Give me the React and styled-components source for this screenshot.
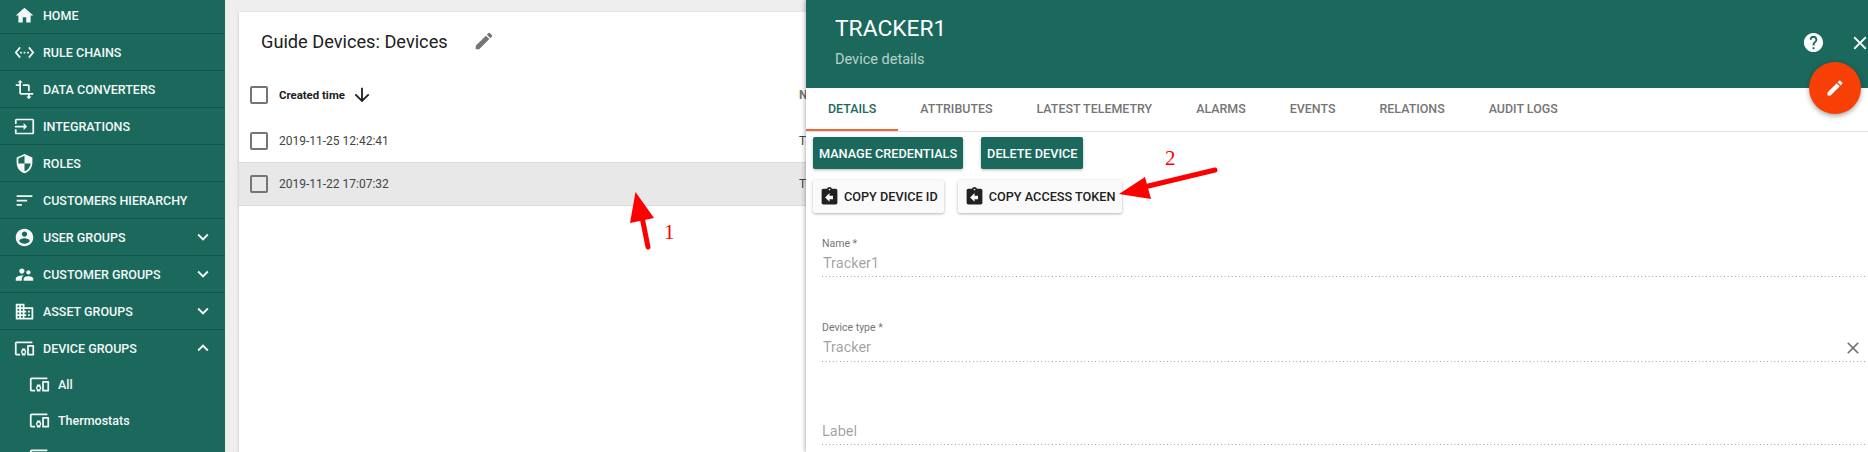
import styled, { createGlobalStyle } from 'styled-components'

const ICONS = {
  home: 'M10 20v-6h4v6h5v-8h3L12 3 2 12h3v8z',
  chains:
    'M7.77 6.76L6.23 5.48.82 12l5.41 6.52 1.54-1.28L3.42 12l4.35-5.24zM7 13h2v-2H7v2zm10-2h-2v2h2v-2zm-6 2h2v-2h-2v2zm6.77-7.52l-1.54 1.28L20.58 12l-4.35 5.24 1.54 1.28L23.18 12l-5.41-6.52z',
  transform:
    'M22 18v-2H8V4h2L7 1 4 4h2v2H2v2h4v8c0 1.1.9 2 2 2h8v2h-2l3 3 3-3h-2v-2h4zM10 8h6v6h2V8c0-1.1-.9-2-2-2h-6v2z',
  input:
    'M21 3.01H3c-1.1 0-2 .9-2 2V9h2V4.99h18v14.03H3V15H1v4.01c0 1.1.9 1.98 2 1.98h18c1.1 0 2-.88 2-1.98v-14c0-1.11-.9-2-2-2zM11 16l4-4-4-4v3H1v2h10v3z',
  security:
    'M12 1L3 5v6c0 5.55 3.84 10.74 9 12 5.16-1.26 9-6.45 9-12V5l-9-4zm0 10.99h7c-.53 4.12-3.28 7.79-7 8.94V12H5V6.3l7-3.11v8.8z',
  sort: 'M3 18h6v-2H3v2zM3 6v2h18V6H3zm0 7h12v-2H3v2z',
  account:
    'M12 2C6.48 2 2 6.48 2 12s4.48 10 10 10 10-4.48 10-10S17.52 2 12 2zm0 3c1.66 0 3 1.34 3 3s-1.34 3-3 3-3-1.34-3-3 1.34-3 3-3zm0 14.2c-2.5 0-4.71-1.28-6-3.22.03-1.99 4-3.08 6-3.08 1.99 0 5.97 1.09 6 3.08-1.29 1.94-3.5 3.22-6 3.22z',
  supervisor:
    'M16.5 12c1.38 0 2.49-1.12 2.49-2.5S17.88 7 16.5 7C15.12 7 14 8.12 14 9.5s1.12 2.5 2.5 2.5zM9 11c1.66 0 2.99-1.34 2.99-3S10.66 5 9 5C7.34 5 6 6.34 6 8s1.34 3 3 3zm7.5 3c-1.83 0-5.5.92-5.5 2.75V19h11v-2.25c0-1.83-3.67-2.75-5.5-2.75zM9 13c-2.33 0-7 1.17-7 3.5V19h7v-2.25c0-.85.33-2.34 2.37-3.47C10.5 13.1 9.66 13 9 13z',
  domain:
    'M12 7V3H2v18h20V7H12zM6 19H4v-2h2v2zm0-4H4v-2h2v2zm0-4H4V9h2v2zm0-4H4V5h2v2zm4 12H8v-2h2v2zm0-4H8v-2h2v2zm0-4H8V9h2v2zm0-4H8V5h2v2zm10 12h-8v-2h2v-2h-2v-2h2v-2h-2V9h8v10zm-2-8h-2v2h2v-2zm0 4h-2v2h2v-2z',
  devices:
    'M3 6h18V4H3c-1.1 0-2 .9-2 2v12c0 1.1.9 2 2 2h4v-2H3V6zm10 6H9v1.78c-.61.55-1 1.33-1 2.22s.39 1.67 1 2.22V20h4v-1.78c.61-.55 1-1.34 1-2.22s-.39-1.67-1-2.22V12zm-2 5.5c-.83 0-1.5-.67-1.5-1.5s.67-1.5 1.5-1.5 1.5.67 1.5 1.5-.67 1.5-1.5 1.5zM22 8h-6c-.5 0-1 .5-1 1v10c0 .5.5 1 1 1h6c.5 0 1-.5 1-1V9c0-.5-.5-1-1-1zm-1 10h-4v-8h4v8z',
  more: 'M16.59 8.59L12 13.17 7.41 8.59 6 10l6 6 6-6z',
  less: 'M12 8l-6 6 1.41 1.41L12 10.83l4.59 4.58L18 14z',
  edit: 'M3 17.25V21h3.75L17.81 9.94l-3.75-3.75L3 17.25zM20.71 7.04c.39-.39.39-1.02 0-1.41l-2.34-2.34c-.39-.39-1.02-.39-1.41 0l-1.83 1.83 3.75 3.75 1.83-1.83z',
  help: 'M12 2C6.48 2 2 6.48 2 12s4.48 10 10 10 10-4.48 10-10S17.52 2 12 2zm1 17h-2v-2h2v2zm2.07-7.75l-.9.92C13.45 12.9 13 13.5 13 15h-2v-.5c0-1.1.45-2.1 1.17-2.83l1.24-1.26c.37-.36.59-.86.59-1.41 0-1.1-.9-2-2-2s-2 .9-2 2H8c0-2.21 1.79-4 4-4s4 1.79 4 4c0 .88-.36 1.68-.93 2.25z',
  close:
    'M19 6.41L17.59 5 12 10.59 6.41 5 5 6.41 10.59 12 5 17.59 6.41 19 12 13.41 17.59 19 19 17.59 13.41 12z',
  down: 'M20 12l-1.41-1.41L13 16.17V4h-2v12.17l-5.58-5.59L4 12l8 8 8-8z',
  clipboard:
    'M19 3h-4.18C14.4 1.84 13.3 1 12 1c-1.3 0-2.4.84-2.82 2H5c-1.1 0-2 .9-2 2v14c0 1.1.9 2 2 2h14c1.1 0 2-.9 2-2V5c0-1.1-.9-2-2-2zm-7 0c.55 0 1 .45 1 1s-.45 1-1 1-1-.45-1-1 .45-1 1-1zm4 12h-4v3l-5-5 5-5v3h4v4z',
}

const Icon = ({ name, size = 24, color = 'currentColor' }) => (
  <IconSvg viewBox="0 0 24 24" width={size} height={size} fill={color}>
    <path d={ICONS[name]} />
  </IconSvg>
)

const MENU = [
  { icon: 'home', label: 'HOME' },
  { icon: 'chains', label: 'RULE CHAINS' },
  { icon: 'transform', label: 'DATA CONVERTERS' },
  { icon: 'input', label: 'INTEGRATIONS' },
  { icon: 'security', label: 'ROLES' },
  { icon: 'sort', label: 'CUSTOMERS HIERARCHY' },
  { icon: 'account', label: 'USER GROUPS', chevron: 'more' },
  { icon: 'supervisor', label: 'CUSTOMER GROUPS', chevron: 'more' },
  { icon: 'domain', label: 'ASSET GROUPS', chevron: 'more' },
  { icon: 'devices', label: 'DEVICE GROUPS', chevron: 'less', open: true },
]

const SUBMENU = ['All', 'Thermostats', '']

const TABS = [
  'DETAILS',
  'ATTRIBUTES',
  'LATEST TELEMETRY',
  'ALARMS',
  'EVENTS',
  'RELATIONS',
  'AUDIT LOGS',
]

const ROWS = [
  { time: '2019-11-25 12:42:41' },
  { time: '2019-11-22 17:07:32', selected: true },
]

const App = () => {
  return (
    <Page>
      <GlobalStyle />
      <Sidebar>
        <Menu>
          {MENU.map(item => (
            <MenuItem key={item.label} $open={item.open}>
              <Icon name={item.icon} size={21} />
              <MenuLabel>{item.label}</MenuLabel>
              {item.chevron && (
                <Chevron>
                  <Icon name={item.chevron} size={22} />
                </Chevron>
              )}
            </MenuItem>
          ))}
          <SubMenu>
            {SUBMENU.map(label => (
              <SubItem key={label}>
                <Icon name="devices" size={21} />
                <SubLabel>{label}</SubLabel>
              </SubItem>
            ))}
          </SubMenu>
        </Menu>
      </Sidebar>

      <Main>
        <Card>
          <CardHeader>
            <CardTitle>Guide Devices: Devices</CardTitle>
            <Icon name="edit" size={22} color="#757575" />
          </CardHeader>
          <HeadRow>
            <Checkbox />
            <TimeHead>
              Created time
              <Icon name="down" size={22} color="#212121" />
            </TimeHead>
            <NameCell $head>Name</NameCell>
          </HeadRow>
          {ROWS.map(row => (
            <Row key={row.time} $selected={row.selected}>
              <Checkbox />
              <TimeCell>{row.time}</TimeCell>
              <NameCell>Tracker1</NameCell>
            </Row>
          ))}
        </Card>

        <Drawer>
          <DrawerHeader>
            <DrawerTitle>TRACKER1</DrawerTitle>
            <DrawerSubtitle>Device details</DrawerSubtitle>
            <HeaderActions>
              <Icon name="help" size={23} color="#fff" />
              <Icon name="close" size={22} color="#fff" />
            </HeaderActions>
            <Fab>
              <Icon name="edit" size={20} color="#fff" />
            </Fab>
          </DrawerHeader>

          <Tabs>
            {TABS.map((tab, i) => (
              <Tab key={tab} $active={i === 0}>
                {tab}
              </Tab>
            ))}
          </Tabs>

          <Actions>
            <ActionRow $gap={18}>
              <PrimaryButton>MANAGE CREDENTIALS</PrimaryButton>
              <PrimaryButton>DELETE DEVICE</PrimaryButton>
            </ActionRow>
            <ActionRow $gap={14}>
              <CopyButton>
                <Icon name="clipboard" size={21} color="#212121" />
                COPY DEVICE ID
              </CopyButton>
              <CopyButton>
                <Icon name="clipboard" size={21} color="#212121" />
                COPY ACCESS TOKEN
              </CopyButton>
            </ActionRow>
          </Actions>

          <Form>
            <Field>
              <FieldLabel>Name *</FieldLabel>
              <FieldValue>Tracker1</FieldValue>
            </Field>
            <Field $pad={4}>
              <FieldLabel>Device type *</FieldLabel>
              <FieldValue>Tracker</FieldValue>
              <ClearIcon>
                <Icon name="close" size={20} color="#757575" />
              </ClearIcon>
            </Field>
            <Field $top={16}>
              <FieldValue $placeholder>Label</FieldValue>
            </Field>
          </Form>
        </Drawer>

        <Annotations viewBox="0 0 1643 452" width="1643" height="452">
          <path d="M423 247 L417 217" stroke="#f00" strokeWidth="5" strokeLinecap="round" />
          <polygon points="410.5,192 405,223 429,218" fill="#f00" />
          <path d="M990 170 L915 188" stroke="#f00" strokeWidth="5" strokeLinecap="round" />
          <polygon points="894,194 920,177 926,199" fill="#f00" />
        </Annotations>
        <Digit $left={439} $top={220}>1</Digit>
        <Digit $left={940} $top={146}>2</Digit>
      </Main>
    </Page>
  )
}

export default App

const GlobalStyle = createGlobalStyle`
  html, body {
    margin: 0;
    height: 452px;
    overflow: hidden;
    background: #eee;
    font-family: Roboto, "Liberation Sans", sans-serif;
  }
`

const IconSvg = styled.svg`
  display: block;
  flex-shrink: 0;
`

const Page = styled.div`
  display: flex;
  width: 1868px;
  height: 452px;
  overflow: hidden;
`

const Sidebar = styled.aside`
  flex: 0 0 225px;
  overflow: hidden;
  background: #1a695c;
  color: #f4f8f7;
`

const Menu = styled.nav`
  margin-top: -3px;
`

const MenuItem = styled.div`
  display: flex;
  align-items: center;
  box-sizing: border-box;
  height: 37px;
  padding-left: 14px;
  border-bottom: 1px solid ${p => (p.$open ? 'transparent' : '#145549')};
`

const MenuLabel = styled.span`
  margin-left: 8px;
  font-size: 12.5px;
  font-weight: 500;
`

const Chevron = styled.span`
  margin-left: auto;
  margin-right: 11px;
`

const SubMenu = styled.div`
  margin-top: -1px;
`

const SubItem = styled.div`
  display: flex;
  align-items: center;
  height: 36px;
  padding-left: 29px;
`

const SubLabel = styled.span`
  margin-left: 8px;
  font-size: 12.5px;
  font-weight: 500;
`

const Main = styled.main`
  position: relative;
  flex: 1;
  overflow: hidden;
  padding: 12px 0 0 14px;
`

const Card = styled.section`
  height: 440px;
  background: #fff;
  box-shadow: 0 1px 3px rgba(0, 0, 0, 0.2);
`

const CardHeader = styled.header`
  display: flex;
  align-items: center;
  gap: 25px;
  box-sizing: border-box;
  height: 58px;
  padding-left: 22px;
`

const CardTitle = styled.h1`
  margin: 0;
  font-size: 18.2px;
  font-weight: 400;
  color: #212121;
`

const HeadRow = styled.div`
  display: flex;
  align-items: center;
  height: 50px;
  padding-left: 11px;
`

const Row = styled.div`
  display: flex;
  align-items: center;
  box-sizing: content-box;
  height: 42px;
  padding-left: 11px;
  border-bottom: 1px solid #d9d9d9;
  background: ${p => (p.$selected ? '#e8e8e8' : '#fff')};
`

const Checkbox = styled.span`
  box-sizing: border-box;
  flex: 0 0 18px;
  height: 18px;
  border: 2px solid #757575;
  border-radius: 2px;
`

const TimeHead = styled.div`
  display: flex;
  align-items: center;
  gap: 6px;
  flex: 0 0 520px;
  margin-left: 11px;
  font-size: 11.4px;
  font-weight: 700;
  color: #212121;
`

const TimeCell = styled.div`
  flex: 0 0 520px;
  margin-left: 11px;
  font-size: 12px;
  color: #444;
`

const NameCell = styled.div`
  font-size: 12px;
  font-weight: ${p => (p.$head ? 700 : 400)};
  color: ${p => (p.$head ? '#757575' : '#444')};
`

const Drawer = styled.section`
  position: absolute;
  top: 0;
  right: 0;
  bottom: 0;
  width: 1062px;
  background: #fff;
  box-shadow: -1px 0 4px rgba(0, 0, 0, 0.3);
`

const DrawerHeader = styled.header`
  position: relative;
  box-sizing: border-box;
  height: 88px;
  padding: 15px 0 0 29px;
  background: #1a695c;
  color: #fff;
`

const DrawerTitle = styled.h2`
  margin: 0;
  font-size: 22.8px;
  line-height: 28px;
  font-weight: 400;
`

const DrawerSubtitle = styled.div`
  margin-top: 9px;
  font-size: 14.5px;
  line-height: 16px;
  color: rgba(255, 255, 255, 0.7);
`

const HeaderActions = styled.div`
  position: absolute;
  top: 31px;
  right: -3px;
  display: flex;
  align-items: center;
  gap: 24px;
`

const Fab = styled.button`
  position: absolute;
  top: 62px;
  right: 7px;
  z-index: 2;
  display: flex;
  align-items: center;
  justify-content: center;
  width: 52px;
  height: 52px;
  padding: 0;
  border: 0;
  border-radius: 50%;
  background: #f83f05;
  box-shadow: 0 2px 5px rgba(0, 0, 0, 0.35);
`

const Tabs = styled.div`
  display: flex;
  height: 44px;
  box-sizing: border-box;
  border-bottom: 1px solid #e2e2e2;
`

const Tab = styled.div`
  display: flex;
  align-items: center;
  box-sizing: border-box;
  height: 43px;
  padding: 0 22px;
  font-size: 12.45px;
  font-weight: 500;
  color: ${p => (p.$active ? '#1a695c' : '#757575')};
  border-bottom: 2px solid ${p => (p.$active ? '#f0653c' : 'transparent')};
`

const Actions = styled.div`
  display: flex;
  flex-direction: column;
  gap: 11px;
  padding: 5px 0 0 7px;
`

const ActionRow = styled.div`
  display: flex;
  gap: ${p => p.$gap}px;
`

const PrimaryButton = styled.button`
  height: 32px;
  padding: 0 6px;
  border: 0;
  border-radius: 2px;
  background: #1a695c;
  color: #fff;
  font: 500 12.7px Roboto, sans-serif;
  box-shadow: 0 1px 3px rgba(0, 0, 0, 0.3);
`

const CopyButton = styled.button`
  display: flex;
  align-items: center;
  gap: 4px;
  height: 33px;
  padding: 0 6px;
  border: 0;
  border-radius: 2px;
  background: #fafafa;
  color: #212121;
  font: 500 12.7px Roboto, sans-serif;
  box-shadow: 0 1px 3px rgba(0, 0, 0, 0.3);
`

const Form = styled.form`
  padding: 24px 0 0 16px;
  display: flex;
  flex-direction: column;
  gap: 44px;
`

const Field = styled.div`
  position: relative;
  padding-top: ${p => p.$top || 0}px;
  padding-bottom: ${p => p.$pad || 3}px;
  background: linear-gradient(to right, #999 0, #999 1.3px, transparent 1.3px) left bottom / 3.6px 1px repeat-x;
`

const FieldLabel = styled.div`
  height: 14px;
  margin-bottom: 3px;
  font-size: 10.5px;
  line-height: 14px;
  color: #757575;
`

const FieldValue = styled.div`
  height: 20px;
  padding-left: ${p => (p.$placeholder ? 0 : 1)}px;
  font-size: 14.5px;
  line-height: 20px;
  color: rgba(0, 0, 0, 0.38);
`

const ClearIcon = styled.span`
  position: absolute;
  right: 5px;
  top: 17px;
`

const Annotations = styled.svg`
  position: absolute;
  top: 0;
  left: 0;
  z-index: 5;
  pointer-events: none;
`

const Digit = styled.span`
  position: absolute;
  left: ${p => p.$left}px;
  top: ${p => p.$top}px;
  z-index: 5;
  font: 21px 'Liberation Serif', serif;
  color: #f00;
`
